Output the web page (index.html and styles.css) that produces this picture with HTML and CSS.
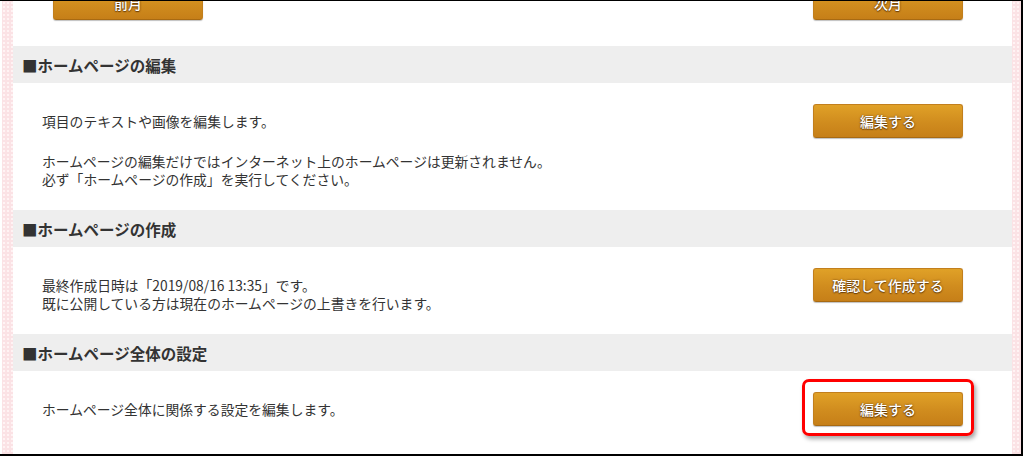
FILE: index.html
```html
<!DOCTYPE html>
<html lang="ja">
<head>
<meta charset="utf-8">
<title>ホームページ</title>
<link rel="stylesheet" href="styles.css">
</head>
<body>
<div class="frame">
  <div class="stripe stripe-left"></div>
  <main class="content">
    <div class="month-nav">
      <button class="btn">前月</button>
      <button class="btn">次月</button>
    </div>

    <section class="section">
      <h2 class="section-title">■ホームページの編集</h2>
      <div class="section-body">
        <div class="section-text">
          <p>項目のテキストや画像を編集します。</p>
          <p class="gap">ホームページの編集だけではインターネット上のホームページは更新されません。<br>必ず「ホームページの作成」を実行してください。</p>
        </div>
        <button class="btn">編集する</button>
      </div>
    </section>

    <section class="section">
      <h2 class="section-title">■ホームページの作成</h2>
      <div class="section-body">
        <div class="section-text">
          <p>最終作成日時は「2019/08/16 13:35」です。<br>既に公開している方は現在のホームページの上書きを行います。</p>
        </div>
        <button class="btn">確認して作成する</button>
      </div>
    </section>

    <section class="section">
      <h2 class="section-title">■ホームページ全体の設定</h2>
      <div class="section-body">
        <div class="section-text">
          <p>ホームページ全体に関係する設定を編集します。</p>
        </div>
        <button class="btn">編集する</button>
      </div>
    </section>
  </main>
  <div class="stripe stripe-right"></div>
  <div class="highlight"></div>
</div>
</body>
</html>
```

FILE: styles.css
```css
* { box-sizing: border-box; }

html, body {
  margin: 0;
  padding: 0;
  background: #ffffff;
}

body {
  font-family: "Noto Sans CJK JP", "Noto Sans", sans-serif;
  color: #333333;
}

.frame {
  position: relative;
  display: flex;
  width: 1023px;
  height: 456px;
  border-top: 1px solid #000000;
  border-right: 2px solid #000000;
  border-bottom: 2px solid #000000;
  padding-left: 2px;
  background: #ffffff;
}

.stripe {
  flex: none;
  background-color: #fbe2e5;
  background-image: radial-gradient(circle, #fff3f4 0.9px, transparent 1.2px);
  background-size: 4px 4px;
}

.stripe-left { width: 11px; }
.stripe-right { width: 9px; }

.content {
  flex: 1;
  overflow: hidden;
  background: #ffffff;
}

.month-nav {
  display: flex;
  justify-content: space-between;
  margin-top: -15px;
  padding: 0 49px 0 40px;
  margin-bottom: 26px;
}

.btn {
  display: flex;
  align-items: center;
  justify-content: center;
  flex: none;
  width: 150px;
  height: 34px;
  padding: 0;
  border: 1px solid #c27f1d;
  border-bottom-color: #a86a12;
  border-radius: 3px;
  background: linear-gradient(#e0a127, #d08c1e 55%, #c67f18);
  box-shadow: 0 1px 1px rgba(0, 0, 0, 0.25);
  color: #ffffff;
  font-family: "Noto Sans CJK JP", sans-serif;
  font-size: 14px;
  font-weight: 500;
  text-shadow: 0 0 2px rgba(60, 30, 0, 0.75), 0 1px 1px rgba(60, 30, 0, 0.6);
}

.section-title {
  margin: 0;
  height: 37px;
  padding-left: 9px;
  display: flex;
  align-items: center;
  background: #eeeeee;
  font-size: 15.5px;
  font-weight: 700;
  color: #333333;
}

.section-body {
  display: flex;
  justify-content: space-between;
  align-items: flex-start;
  padding: 21px 49px 22px 29px;
}

.section-text {
  padding-top: 8px;
}

.section-text p {
  margin: 0;
  font-size: 13.8px;
  line-height: 18px;
}

.section-text p.gap {
  margin-top: 22px;
}

.highlight {
  position: absolute;
  left: 802px;
  top: 378px;
  width: 172px;
  height: 57px;
  border: 3px solid #ff0000;
  border-radius: 7px;
  box-shadow: 2px 3px 4px rgba(0, 0, 0, 0.35);
  pointer-events: none;
}
```
